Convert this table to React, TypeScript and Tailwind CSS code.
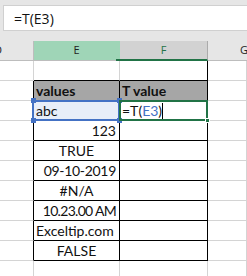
import React from "react";

type Align = "left" | "center" | "right";

const cellFont = { fontFamily: "Lato, 'Liberation Sans', sans-serif" };

const values: { text: string; align: Align; tight?: string }[] = [
  { text: "123", align: "right" },
  { text: "TRUE", align: "center" },
  { text: "09-10-2019", align: "right", tight: "tracking-[-0.3px]" },
  { text: "#N/A", align: "center" },
  { text: "10.23.00 AM", align: "right", tight: "tracking-[-0.7px]" },
  { text: "Exceltip.com", align: "left" },
  { text: "FALSE", align: "center" },
];

const alignClass: Record<Align, string> = {
  left: "justify-start pl-[2px]",
  center: "justify-center",
  right: "justify-end pr-[3px]",
};

function Blank({ dark = false, darkBottom = false }: { dark?: boolean; darkBottom?: boolean }) {
  return (
    <div
      className={`h-5 border-r border-b ${dark ? "border-r-black" : "border-r-[#d4d4d4]"} ${
        darkBottom ? "border-b-black" : "border-b-[#d4d4d4]"
      }`}
    />
  );
}

function DataCell({ children, align = "left", className = "" }: { children?: React.ReactNode; align?: Align; className?: string }) {
  return (
    <div
      className={`h-5 flex items-center border-r border-b border-black text-[14px] leading-none text-[#111] ${alignClass[align]} ${className}`}
      style={cellFont}
    >
      {children}
    </div>
  );
}

export default function App() {
  return (
    <div className="w-[247px] h-[276px] overflow-hidden bg-white select-none">
      {/* formula bar */}
      <div className="h-[41px] bg-[#e6e6e6] pt-[5px] pl-[3px]">
        <div
          className="h-[26px] bg-white border border-r-0 border-[#d0d0d0] flex items-center pl-[10px] text-[14px] text-[#111]"
          style={{ fontFamily: "'Open Sans', sans-serif" }}
        >
          =T(E3)
        </div>
      </div>

      {/* column headers */}
      <div className="grid grid-cols-[34px_86px_88px_1fr] h-5 text-[11px]" style={{ fontFamily: "'Open Sans', sans-serif" }}>
        <div className="bg-[#e6e6e6] border-r border-b border-[#bdbdbd] overflow-hidden flex items-center">
          <span className="-ml-[6px] text-[#222]">D</span>
        </div>
        <div className="relative bg-[#9fd5b7] border-r border-b border-[#9fd5b7] border-b-[#bdbdbd] flex items-center justify-center text-[#222]">
          E
          <div className="absolute -right-[1px] -bottom-[1px] w-[4px] h-[2px] bg-[#217346]" />
        </div>
        <div className="bg-[#d2d2d2] border-r border-[#ababab] border-b-2 border-b-[#217346] flex items-center justify-center text-[#217346]">
          F
        </div>
        <div className="bg-[#e6e6e6] border-b border-[#bdbdbd] flex items-center pl-[32px] text-[#222]">
          G
        </div>
      </div>

      {/* sheet body */}
      <div className="grid grid-cols-[34px_86px_88px_1fr]">
        {/* row 1 */}
        <Blank />
        <Blank darkBottom />
        <Blank dark darkBottom />
        <Blank />

        {/* row 2: table header */}
        <Blank dark />
        <DataCell className="bg-[#a6a6a6] font-bold">values</DataCell>
        <DataCell className="bg-[#a6a6a6] font-bold">T value</DataCell>
        <Blank />

        {/* row 3: referenced cell and active cell */}
        <Blank dark />
        <DataCell className="relative bg-[#e8eef8]">
          abc
          <div className="absolute -left-[2px] -top-[1px] -right-[1px] -bottom-[1px] border-2 border-[#4472c4] pointer-events-none" />
          <div className="absolute -left-[3px] -top-[3px] w-[5px] h-[5px] bg-[#4472c4]" />
          <div className="absolute -right-[3px] -top-[3px] w-[5px] h-[5px] bg-[#4472c4]" />
          <div className="absolute -left-[3px] -bottom-[3px] w-[5px] h-[5px] bg-[#4472c4]" />
          <div className="absolute -right-[3px] -bottom-[3px] w-[5px] h-[5px] bg-[#4472c4]" />
        </DataCell>
        <DataCell className="relative">
          <span>=T</span>
          <span>(</span>
          <span className="text-[#4472c4]">E3</span>
          <span>)</span>
          <span className="w-px h-[16px] bg-black" />
          <div className="absolute -left-[1px] -top-[1px] -right-[1px] -bottom-[1px] border-2 border-[#217346] pointer-events-none" />
          <div className="absolute -right-[3px] -bottom-[3px] w-[5px] h-[5px] bg-[#217346] border border-white" />
        </DataCell>
        <Blank />

        {/* rows 4-9 */}
        {values.map((v) => (
          <React.Fragment key={v.text}>
            <Blank dark />
            <DataCell align={v.align} className={v.tight ?? ""}>
              {v.text}
            </DataCell>
            <DataCell />
            <Blank />
          </React.Fragment>
        ))}

        {/* row 10 */}
        <Blank />
        <Blank />
        <Blank />
        <Blank />
      </div>
    </div>
  );
}
